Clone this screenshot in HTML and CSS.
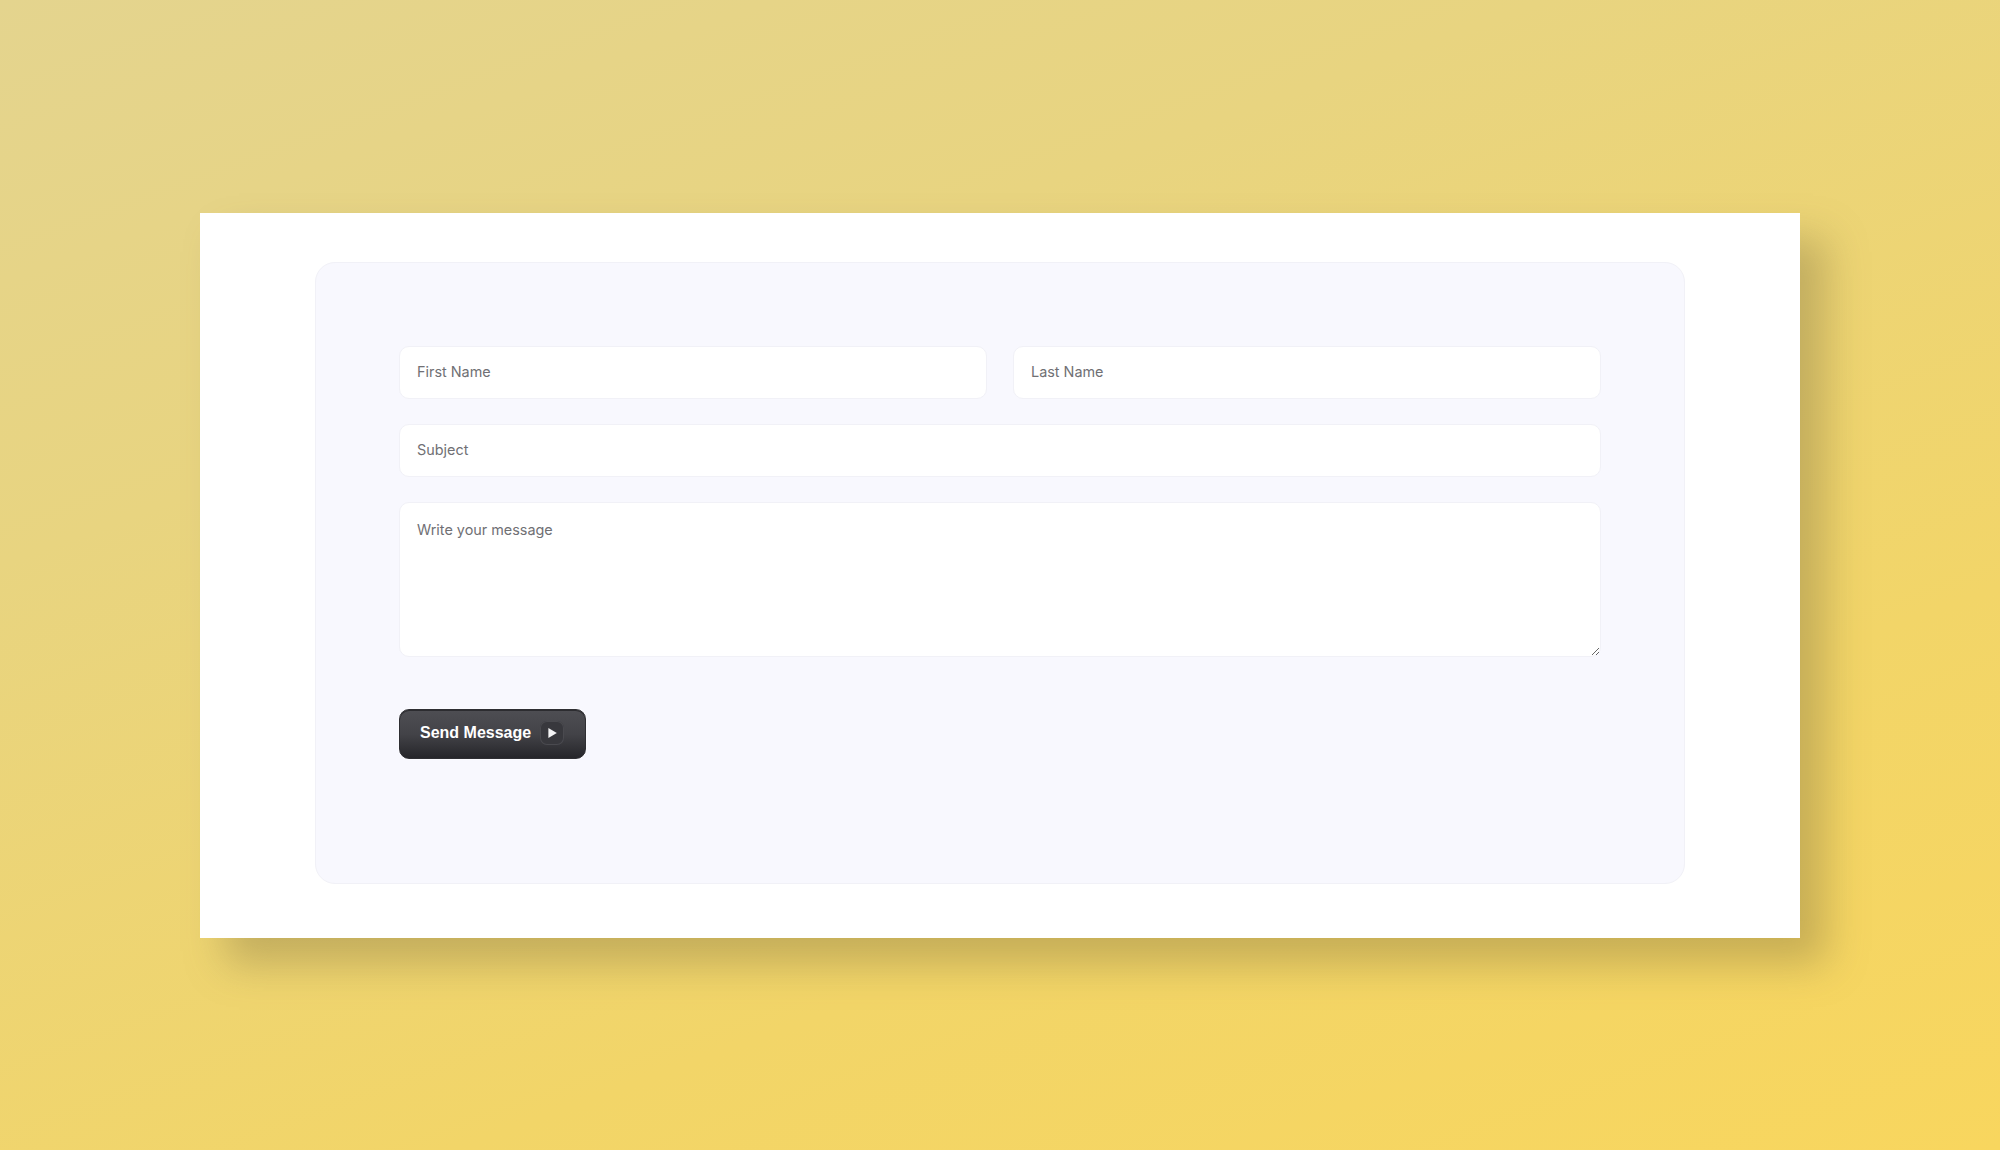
FILE: index.html
```html
<!DOCTYPE html>
<html lang="en">

<head>
    <meta charset="UTF-8">
    <meta name="viewport" content="width=device-width, initial-scale=1.0">
    <title>Contact</title>
    <link rel="stylesheet" href="styles.css">
</head>

<body>
    <div class="card">
        <form class="panel">
            <div class="row">
                <input class="field" type="text" placeholder="First Name">
                <input class="field" type="text" placeholder="Last Name">
            </div>
            <input class="field" type="text" placeholder="Subject">
            <textarea class="field message" placeholder="Write your message"></textarea>
            <button class="send" type="button">
                Send Message
                <span class="send-icon">
                    <svg width="12" height="12" viewBox="0 0 10 10">
                        <path d="M2 0.8 L9 5 L2 9.2 Z" fill="#f4f4f6" />
                    </svg>
                </span>
            </button>
        </form>
    </div>
</body>

</html>
```

FILE: styles.css
```css
* {
    margin: 0;
    padding: 0;
    box-sizing: border-box;
}

html,
body {
    height: 100%;
}

body {
    padding: 213px 200px;
    background: linear-gradient(160deg, #e4d48e 0%, #e8d480 30%, #f2d568 70%, #f8d65e 100%);
    font-family: Inter, "Liberation Sans", sans-serif;
}

.card {
    height: 725px;
    padding: 49px 115px 54px;
    background-color: #fff;
    box-shadow: 26px 26px 38px rgba(120, 105, 60, .36);
}

.panel {
    display: flex;
    flex-direction: column;
    align-items: flex-start;
    gap: 25px;
    height: 100%;
    padding: 83px 83px;
    background-color: #f8f8fe;
    border: 1px solid #f1f1f7;
    border-radius: 20px;
}

.row {
    display: grid;
    grid-template-columns: repeat(2, 1fr);
    column-gap: 26px;
    width: 100%;
}

.field {
    display: block;
    width: 100%;
    height: 53px;
    padding: 0 17px 3px;
    font-family: inherit;
    font-size: 14.4px;
    color: #666;
    background-color: #fff;
    border: 1px solid #f1f1f7;
    border-radius: 10px;
    outline: none;
}

.field::placeholder {
    color: #707074;
    opacity: 1;
}

.message {
    height: 155px;
    padding: 17px 17px;
    line-height: 20px;
}

.send {
    display: flex;
    align-items: center;
    gap: 9px;
    height: 50px;
    margin-top: 27px;
    padding: 0 21px 2px 20px;
    font-family: "Liberation Sans", Arial, sans-serif;
    font-size: 16px;
    font-weight: 700;
    color: #fff;
    background: linear-gradient(180deg, #4e4e53 0%, #434348 50%, #26262a 100%);
    border: 1px solid #2f2f33;
    border-radius: 10px;
    box-shadow: inset 0 1px 0 #2c2c30, 0 0 0 1px #fbfbff;
}

.send-icon {
    display: flex;
    align-items: center;
    justify-content: center;
    width: 24px;
    height: 24px;
    background-color: #38383d;
    border-radius: 7px;
    box-shadow: inset 0 0 0 1px #4a4a4f;
}
```
